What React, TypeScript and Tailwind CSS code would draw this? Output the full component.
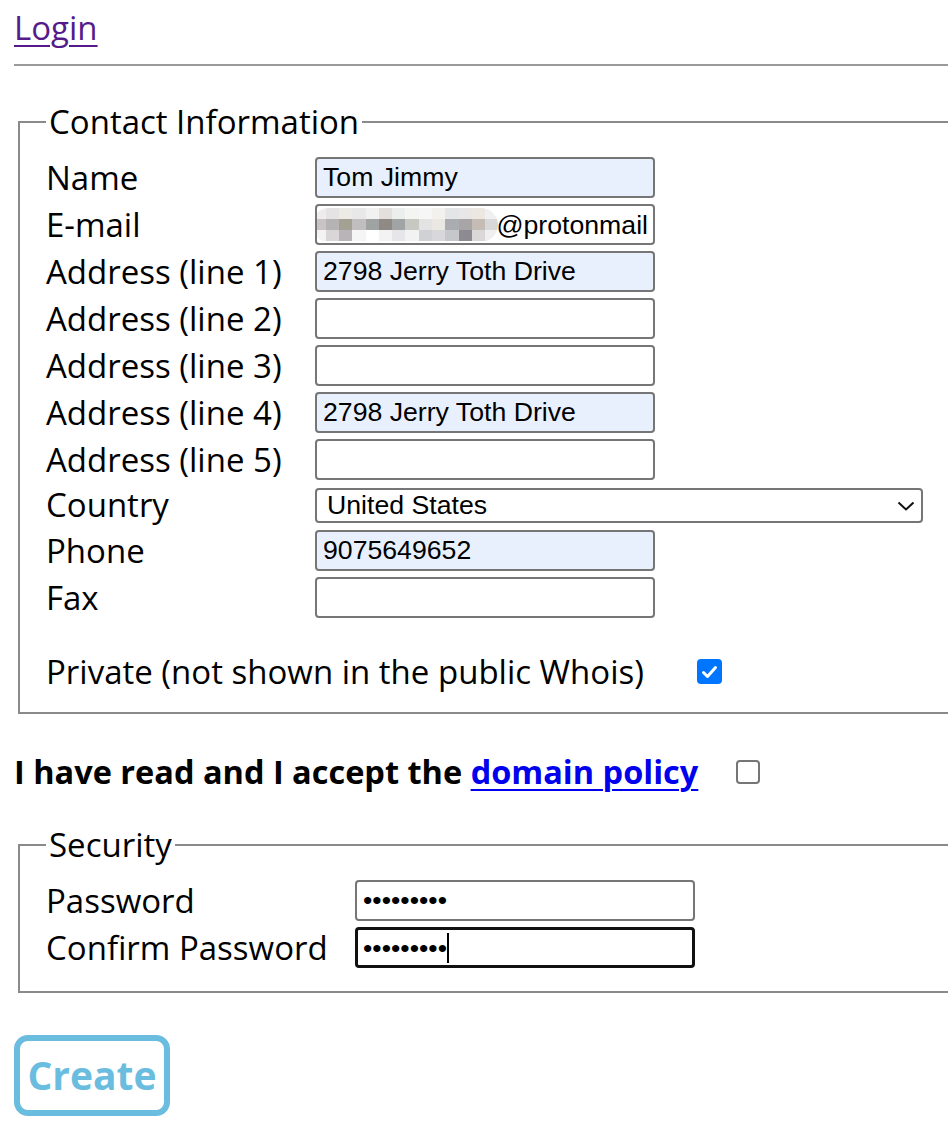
import React from "react";

const sans = "font-['Open_Sans','Noto_Sans',sans-serif]";
const arial = "font-['Liberation_Sans',Arial,sans-serif]";

const mosaic = [
  ["#eeeced", "#e6e3e4", "#ecebe6", "#e9e8e8", "#f1f1f1", "#e2dfdc", "#eceded", "#f4f4f2", "#f6f6f6", "#f2f1ee", "#e4e5e7", "#e8e6e7", "#ede7e2", "#f0f0f0"],
  ["#c9c3c6", "#b5b3b4", "#a2a194", "#c0bebe", "#9fa3a2", "#8f8a84", "#a0a4a4", "#c8c8c2", "#e3e3e3", "#ebe8e3", "#a9acb1", "#a7a5a8", "#c5bdb5", "#d8d8d8"],
  ["#f4f3f3", "#d9d6d8", "#b8b4b7", "#f5f5f5", "#ffffff", "#f3f3f3", "#e6e6e8", "#f2f2f2", "#cfd1d4", "#d8d8da", "#c6c7ca", "#8d8a91", "#d9d7d8", "#efefef"],
];

function TextBox({ value = "", filled = false }: { value?: string; filled?: boolean }) {
  return (
    <input
      readOnly
      value={value}
      className={`h-[41px] w-[340px] rounded-[4px] border-2 border-[#767676] px-[6px] text-[26.67px] text-black outline-none ${arial} ${
        filled ? "bg-[#e8f0fe]" : "bg-white"
      }`}
    />
  );
}

function Label({ children, tight = false }: { children: React.ReactNode; tight?: boolean }) {
  return <span className={tight ? "leading-[36px]" : "leading-[41px]"}>{children}</span>;
}

function EmailBox() {
  return (
    <div className="flex h-[41px] w-[340px] items-center justify-end overflow-hidden rounded-[4px] border-2 border-[#767676] bg-white pr-[5px]">
      <div className="mr-[-2px] flex h-[34px] w-[186px] shrink-0 flex-col overflow-hidden rounded-full blur-[0.6px]">
        {mosaic.map((row, r) => (
          <div key={r} className="flex flex-1">
            {row.map((c, i) => (
              <div key={i} className="h-full flex-1" style={{ backgroundColor: c }} />
            ))}
          </div>
        ))}
      </div>
      <span className={`shrink-0 text-[26.67px] text-black ${arial}`}>@protonmail</span>
    </div>
  );
}

export default function App() {
  return (
    <div className="w-full overflow-hidden bg-white">
      <div className={`w-[1000px] pl-[14px] pb-[40px] text-[33px] text-black ${sans}`}>
        <div className="mt-[6px] h-[43px] leading-[43px]">
          <a href="#" className="text-[#551a8b] underline decoration-[2px] underline-offset-[5px]">
            Login
          </a>
        </div>
        <div className="mt-[15px] border-t-2 border-[#9a9a9a]" />

        <fieldset className="ml-[4px] mt-[34px] w-[970px] border-2 border-[#8a8a8a] pb-[19px] pl-[26px] pt-[14px]">
          <legend className="px-[3px] leading-[43px]">Contact Information</legend>
          <div className="grid grid-cols-[269px_auto] items-center gap-y-[6px]">
            <Label>Name</Label>
            <TextBox value="Tom Jimmy" filled />
            <Label>E-mail</Label>
            <EmailBox />
            <Label>Address (line 1)</Label>
            <TextBox value="2798 Jerry Toth Drive" filled />
            <Label>Address (line 2)</Label>
            <TextBox />
            <Label>Address (line 3)</Label>
            <TextBox />
            <Label>Address (line 4)</Label>
            <TextBox value="2798 Jerry Toth Drive" filled />
            <Label>Address (line 5)</Label>
            <TextBox />
            <Label tight>Country</Label>
            <div className="relative mt-[2px] h-[36px] w-[608px]">
              <select
                defaultValue="us"
                className={`block h-[35px] w-full appearance-none rounded-[4px] border-2 border-[#767676] bg-white py-0 pl-[10px] text-[26.67px] leading-[31px] text-black outline-none ${arial}`}
              >
                <option value="us">United States</option>
              </select>
              <svg
                className="pointer-events-none absolute right-[8px] top-[12px]"
                width="18"
                height="12"
                viewBox="0 0 18 12"
                fill="none"
                stroke="#111"
                strokeWidth="2"
              >
                <path d="M1.5 2.5 L9 9.5 L16.5 2.5" />
              </svg>
            </div>
            <Label>Phone</Label>
            <TextBox value="9075649652" filled />
            <Label>Fax</Label>
            <TextBox />
          </div>
          <div className="mt-[32px] flex h-[43px] items-center gap-[53px]">
            <span className="leading-[43px]">Private (not shown in the public Whois)</span>
            <div className="flex h-[25px] w-[25px] items-center justify-center rounded-[4px] bg-[#0075ff]">
              <svg width="17" height="14" viewBox="0 0 17 14" fill="none" stroke="white" strokeWidth="3" strokeLinecap="round" strokeLinejoin="round">
                <path d="M2.5 7.5 L6.5 11.5 L14.5 2.5" />
              </svg>
            </div>
          </div>
        </fieldset>

        <div className="mt-[36px] flex h-[43px] items-center gap-[38px]">
          <span className="text-[32.5px] font-bold leading-[43px]">
            I have read and I accept the{" "}
            <a href="#" className="text-[#0000ee] underline decoration-[2px] underline-offset-[5px]">
              domain policy
            </a>
          </span>
          <div className="h-[24px] w-[24px] rounded-[4px] border-2 border-[#767676] bg-white" />
        </div>

        <fieldset className="ml-[4px] mt-[30px] w-[970px] border-2 border-[#8a8a8a] pb-[23px] pl-[26px] pt-[14px]">
          <legend className="px-[3px] leading-[43px]">Security</legend>
          <div className="grid grid-cols-[309px_auto] items-center gap-y-[6px]">
            <Label>Password</Label>
            <input
              readOnly
              type="password"
              value="123456789"
              className={`h-[41px] w-[340px] rounded-[4px] border-2 border-[#767676] bg-white px-[6px] text-[26.67px] text-black outline-none ${arial}`}
            />
            <Label>Confirm Password</Label>
            <div className={`flex h-[41px] w-[340px] items-center rounded-[4px] border-[3px] border-[#111] bg-white pl-[5px] text-[26.67px] text-black ${arial}`}>
              <span>•••••••••</span>
              <span className="h-[30px] w-[2px] bg-black" />
            </div>
          </div>
        </fieldset>

        <button
          className="mt-[42px] flex h-[81px] w-[156px] items-center justify-center rounded-[14px] border-[6px] border-[#6bbde0] bg-white text-[39px] font-bold text-[#6bbde0]"
        >
          Create
        </button>
      </div>
    </div>
  );
}
